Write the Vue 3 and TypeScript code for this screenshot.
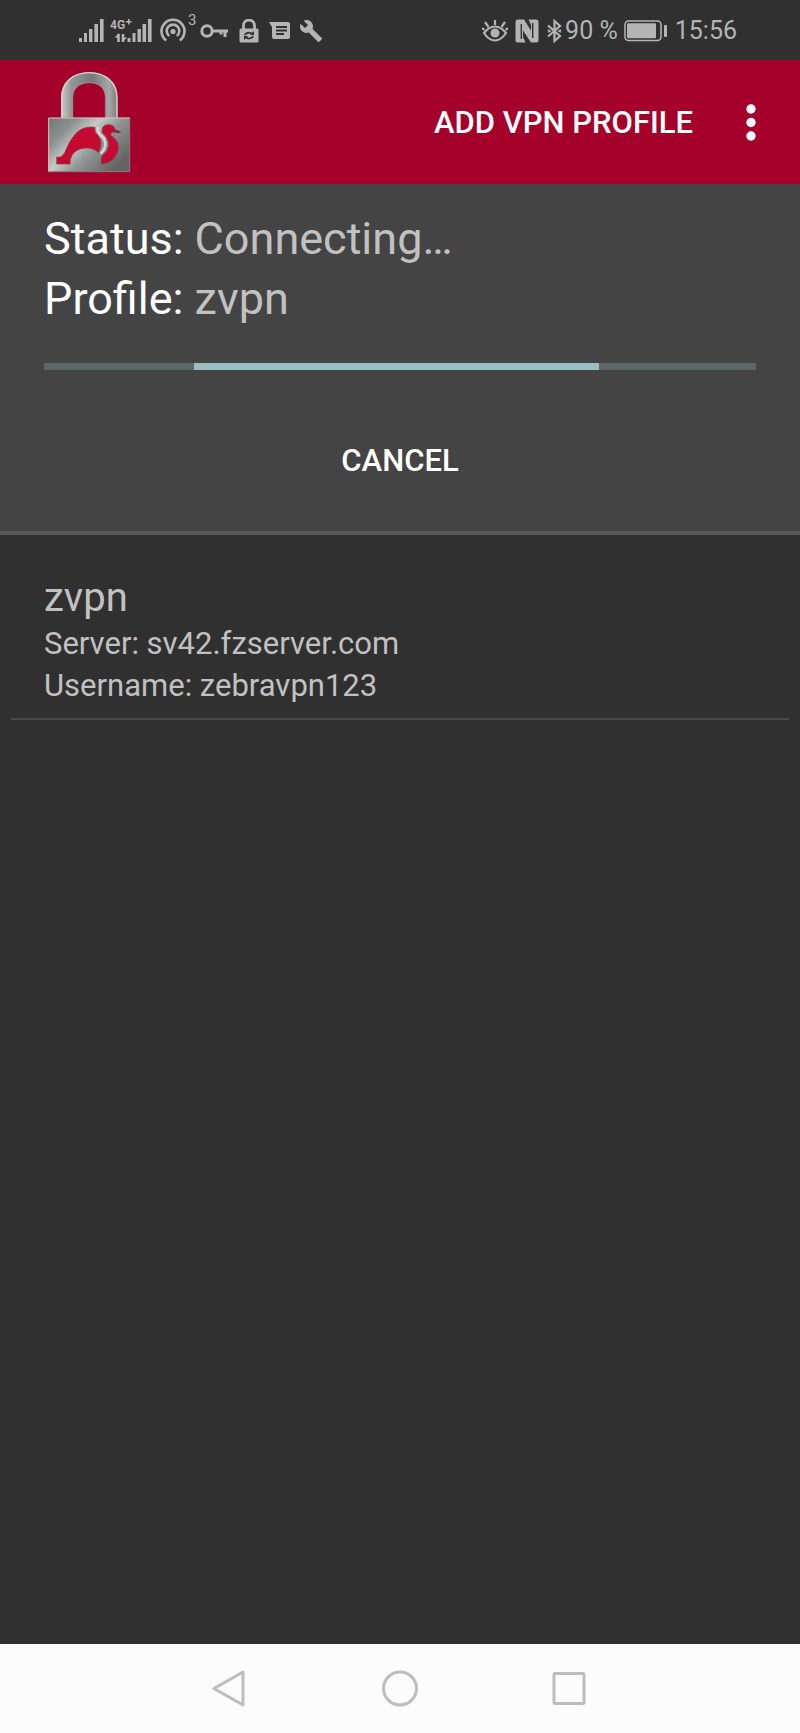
<script setup lang="ts">
interface Profile {
  name: string
  server: string
  username: string
}

const profiles: Profile[] = [
  { name: 'zvpn', server: 'sv42.fzserver.com', username: 'zebravpn123' },
]

const connection = { status: 'Connecting…', profile: 'zvpn' }
</script>

<template>
  <div class="screen">
    <div class="statusbar">
      <div class="group notifications">
        <svg class="signal" width="25" height="24" viewBox="0 0 25 24" fill="currentColor" aria-hidden="true">
          <rect x="0" y="19" width="3" height="4" /><rect x="5" y="14" width="3" height="9" /><rect x="10" y="10" width="3.4" height="13" /><rect x="15.4" y="5" width="3.6" height="18" /><rect x="21" y="0" width="3.6" height="23" />
        </svg>
        <svg class="mobile" width="42" height="24" viewBox="0 0 42 24" fill="currentColor" aria-label="4G+">
          <text x="0" y="10" class="network">4G</text>
          <path d="M16 2h2v-2h1.5v2h2v1.5h-2v2H18v-2h-2z" />
          <path d="M8.500 15v8M13 15v8" stroke="currentColor" stroke-width="2.600" />
          <path d="M4.500 18.500L9 14v4.500zM12.500 23v-4.500H17z" />
          <rect x="17.500" y="19" width="3" height="4" /><rect x="22.500" y="14" width="3" height="9" /><rect x="27.500" y="10" width="3.400" height="13" /><rect x="32.500" y="5" width="3.600" height="18" /><rect x="38" y="0" width="3.600" height="23" />
        </svg>
        <svg class="hotspot" width="40" height="34" viewBox="0 -4 40 34" fill="none" stroke="currentColor" stroke-width="2.600" aria-label="3 devices">
          <path d="M6.200 27.500A11.500 11.500 0 1 1 19.800 27.500M9.100 22.900A6.300 6.300 0 1 1 16.900 22.900" />
          <circle cx="13" cy="18.500" r="2.600" fill="currentColor" stroke="none" />
          <text x="28" y="12" class="count">3</text>
        </svg>
        <svg class="key" width="29" height="16" viewBox="0 0 29 16" fill="none" stroke="currentColor" stroke-width="3" aria-hidden="true">
          <circle cx="7" cy="8" r="5.200" /><path d="M12 8H28M25 8v6M21 8v3.500" />
        </svg>
        <svg class="lock" width="20" height="24" viewBox="0 0 20 24" aria-hidden="true">
          <path d="M4.500 11V6.500a5.500 5.500 0 0 1 11 0V11" fill="none" stroke="currentColor" stroke-width="2.800" />
          <rect x="0.500" y="9.500" width="19" height="14" rx="1.500" fill="currentColor" />
          <path d="M5.500 15.800q4.500-4 8-.8M14.500 17.400q-4.500 4-8 .8" fill="none" stroke="#303030" stroke-width="1.800" /><path d="M15 12v4h-4zM5 21v-4h4z" fill="#303030" />
        </svg>
        <svg class="message" width="21" height="18" viewBox="0 0 21 18" aria-hidden="true">
          <path d="M0 0H19q2 0 2 2V15q0 2-2 2H5q-2 0-2-2V5z" fill="currentColor" />
          <path d="M7 5h11M7 8.500h11M7 12h8" stroke="#303030" stroke-width="1.800" />
        </svg>
        <svg class="wrench" width="24" height="24" viewBox="0 0 24 24" fill="currentColor" aria-hidden="true">
          <path d="M22.700 19l-9.100-9.100c.9-2.300.4-5-1.500-6.900-2-2-5-2.400-7.400-1.300L9 6 6 9 1.600 4.700C.4 7.100.9 10.100 2.900 12.100c1.900 1.900 4.600 2.400 6.900 1.500l9.100 9.100c.4.4 1 .4 1.400 0l2.300-2.300c.5-.4.5-1.100.1-1.400z" />
        </svg>
      </div>
      <div class="group system">
        <svg class="eye" width="26" height="24" viewBox="0 0 26 24" fill="none" stroke="currentColor" stroke-width="2.200" aria-hidden="true">
          <path d="M2 14Q7 7.500 13 7.500T24 14Q19 21.500 13 21.500T2 14zM13 6V1M6.500 8L3 3M19.500 8L23 3M2.500 11L0 9M23.500 11L26 9" />
          <circle cx="13" cy="14" r="4.500" fill="currentColor" stroke="none" />
        </svg>
        <svg class="nfc" width="24" height="24" viewBox="0 0 24 24" fill="currentColor" aria-hidden="true">
          <path d="M3 0.500H9L16 11.500V6L13.500 0.500H21q2.500 0 2.500 2.500V21q0 2.500-2.500 2.500H16L8 11.500V18L10.500 23.500H3q-2.500 0-2.500-2.500V3q0-2.500 2.500-2.500z" />
          <path d="M6.300 20V5M17.700 19V4" stroke="#303030" stroke-width="1.400" />
        </svg>
        <svg class="bluetooth" width="15" height="24" viewBox="0 0 15 24" fill="none" stroke="currentColor" stroke-width="2.200" aria-hidden="true">
          <path d="M1 6.500L13 17 7.500 22V2L13 7 1 17.500" /><path d="M1 11l2 1-2 1M14 11l-2 1 2 1" stroke-width="1.500" />
        </svg>
        <span class="charge">90 %</span>
        <svg class="battery" width="44" height="22" viewBox="0 0 44 22" aria-hidden="true">
          <rect x="1" y="1" width="36" height="19.500" rx="3.500" fill="none" stroke="currentColor" stroke-width="1.500" />
          <rect x="3" y="3.200" width="29" height="15" rx="1" fill="currentColor" /><rect x="40" y="5" width="3" height="12" rx="1" fill="currentColor" />
        </svg>
        <time class="clock">15:56</time>
      </div>
    </div>

    <header class="appbar">
      <svg class="logo" width="84" height="102" viewBox="50 33 252 306" role="img" aria-label="VPN client">
        <defs>
          <linearGradient id="metal" x1="0" y1="0" x2="1" y2="0.650">
            <stop offset="0" stop-color="#737774" /><stop offset="0.250" stop-color="#8c908e" /><stop offset="0.460" stop-color="#c5c9c7" /><stop offset="0.650" stop-color="#929694" /><stop offset="1" stop-color="#626563" />
          </linearGradient>
          <linearGradient id="shackle" x1="0" y1="0" x2="1" y2="0">
            <stop offset="0" stop-color="#c9cccb" /><stop offset="0.180" stop-color="#929695" /><stop offset="0.550" stop-color="#777c79" /><stop offset="0.850" stop-color="#a4a7a5" /><stop offset="1" stop-color="#7b7f7c" />
          </linearGradient>
        </defs>
        <path d="M93 174V112C93 65 130 37 177 37S261 65 261 112V174H225V112C225 84 205 69 177 69S128 84 128 112V174Z" fill="url(#shackle)" />
        <path d="M94 174V112C94 66 130 38 177 38S260 66 260 112V174" fill="none" stroke="#e0d5d5" stroke-width="4" />
        <path d="M127 173V112C127 83 148 68 177 68S225 84 225 112V173" fill="none" stroke="#a98d92" stroke-width="2" />
        <rect x="54" y="173" width="245" height="163" fill="url(#metal)" />
        <path d="M55 335V174H298" fill="none" stroke="#d0bfc1" stroke-width="3" />
        <path d="M55 335H298V175" fill="none" stroke="#8c7779" stroke-width="3" />
        <path d="M79 312V291Q92 295 103 278Q116 244 135 222Q154 201 181 201L194 202Q191 216 203 226Q211 235 212 249Q213 263 204 278Q191 264 170 264Q137 264 124 288Q119 297 119 312Z" fill="#c60930" stroke="#843c49" stroke-width="2" />
        <path d="M216 207Q218 194 235 194Q252 194 253 208L270 215Q263 218 248 216Q240 218 241 226Q262 240 264 257Q265 281 246 300Q233 311 213 312V294L216 286Q231 277 235 259Q237 247 229 233Q225 226 219 222Q213 216 216 207Z" fill="#c60930" stroke="#843c49" stroke-width="2" />
        <path d="M204 201Q199 216 212 227Q226 237 225 254Q224 269 211 281" fill="none" stroke="#d3d8d5" stroke-width="8" />
        <path d="M249 211Q258 216 271 215L270 219Q260 219 250 216Z" fill="#793341" />
      </svg>
      <div class="actions">
        <button class="text-button" type="button">ADD VPN PROFILE</button>
        <button class="more" type="button" aria-label="More options">
          <svg width="10" height="38" viewBox="0 0 10 38" fill="#fff" aria-hidden="true"><circle cx="5" cy="5" r="4.700" /><circle cx="5" cy="18.500" r="4.700" /><circle cx="5" cy="32" r="4.700" /></svg>
        </button>
      </div>
    </header>

    <section class="connection">
      <dl class="details">
        <dt>Status:</dt><dd>{{ connection.status }}</dd>
        <dt>Profile:</dt><dd>{{ connection.profile }}</dd>
      </dl>
      <div class="progress" role="progressbar" aria-label="Connecting"><div class="segment"></div></div>
      <button class="text-button cancel" type="button">CANCEL</button>
    </section>

    <main class="profiles">
      <article v-for="profile in profiles" :key="profile.name" class="profile">
        <h2>{{ profile.name }}</h2>
        <p>Server: {{ profile.server }}</p>
        <p>Username: {{ profile.username }}</p>
      </article>
    </main>

    <nav class="navbar" aria-label="System navigation">
      <button type="button" aria-label="Back"><svg width="38" height="38" viewBox="0 0 38 38"><path d="M32 2V35L3 18.500Z" /></svg></button>
      <button type="button" aria-label="Home"><svg width="38" height="38" viewBox="0 0 38 38"><circle cx="19" cy="18.500" r="16.500" /></svg></button>
      <button type="button" aria-label="Recent apps"><svg width="38" height="38" viewBox="0 0 38 38"><rect x="3" y="3.500" width="30" height="30" rx="1" /></svg></button>
    </nav>
  </div>
</template>

<style>
body {
  margin: 0;
  background: #303030;
}
</style>

<style scoped>
.screen {
  display: flex;
  flex-direction: column;
  min-height: 100vh;
  background: #303030;
  color: #c1c1c1;
  font-family: Roboto, "Noto Sans", sans-serif;
}
button {
  padding: 0;
  border: 0;
  background: none;
  color: #fff;
  font: inherit;
  cursor: pointer;
}
svg {
  display: block;
  flex: none;
}
.statusbar {
  display: flex;
  justify-content: space-between;
  align-items: center;
  height: 60px;
  box-sizing: border-box;
  padding: 1px 63px 0 79px;
  color: #b4b4b4;
}
.group {
  display: flex;
  align-items: center;
}
.mobile { margin-left: 6px; }
.hotspot { margin: 0 0 10px 8px; }
.lock { margin-left: 10px; }
.message { margin-left: 10px; }
.wrench { margin-left: 9px; }
.network {
  font-size: 12px;
  font-weight: 700;
}
.count {
  fill: currentColor;
  stroke: none;
  font-size: 15px;
}
.nfc { margin-left: 7px; }
.bluetooth { margin-left: 8px; }
.charge, .clock {
  font-size: 25px;
  line-height: 30px;
  white-space: nowrap;
}
.charge { margin-left: 3px; }
.battery { margin: 0 7px 0 6px; }
.appbar {
  display: flex;
  justify-content: space-between;
  align-items: center;
  height: 124px;
  padding: 0 44px 0 47px;
  background: #a4022b;
}
.actions {
  display: flex;
  align-items: center;
  gap: 53px;
  padding-top: 2px;
}
.text-button {
  font-size: 31px;
  font-weight: 500;
  line-height: 36px;
}
.connection {
  display: flex;
  flex-direction: column;
  padding: 25px 44px 52px;
  border-bottom: 4px solid #595959;
  background: #444;
}
.details {
  display: grid;
  grid-template-columns: auto 1fr;
  column-gap: 11px;
  margin: 0;
  font-size: 45px;
  line-height: 60px;
}
dt { color: #fff; }
dd { margin: 0; }
.progress {
  height: 7px;
  margin-top: 34px;
  background: #5e6666;
}
.segment {
  width: 57%;
  height: 100%;
  margin-left: 21%;
  background: #9abdc5;
}
.cancel {
  align-self: center;
  margin-top: 73px;
  padding: 0 16px;
}
.profiles { flex: 1; }
.profile {
  margin: 0 11px;
  padding: 37px 33px 11px;
  border-bottom: 2px solid #494949;
}
.profile h2 {
  margin: 0;
  font-size: 40px;
  font-weight: 400;
  line-height: 51px;
}
.profile p {
  margin: 0;
  font-size: 31px;
  line-height: 42px;
}
.navbar {
  display: flex;
  justify-content: center;
  align-items: center;
  gap: 132px;
  height: 89px;
  background: #fcfcfc;
}
.navbar svg {
  fill: none;
  stroke: #bdbdbd;
  stroke-width: 3;
  stroke-linejoin: round;
}
</style>
